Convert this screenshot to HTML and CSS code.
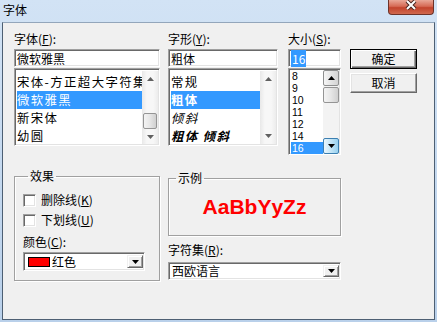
FILE: index.html
```html
<!doctype html>
<html>
  <head>
    <title>字体</title>
    <meta charset="UTF-8" />
    <link rel="stylesheet" href="styles.css">
  </head>

  <body>
    <div class="window">
      <div class="titlebar">
        <span class="title">字体</span>
        <div class="close">
          <svg width="12" height="10" viewBox="0 0 12 10">
            <path d="M2 1L10 9M10 1L2 9" stroke="#4a2620" stroke-width="4" />
            <path d="M2 1L10 9M10 1L2 9" stroke="#ffffff" stroke-width="2" />
          </svg>
        </div>
      </div>

      <div class="client">
        <div class="top">
          <!-- font name -->
          <div class="col col-font">
            <div class="label">字体(<u>F</u>):</div>
            <div class="textbox">微软雅黑</div>
            <div class="list list-font">
              <ul class="items">
                <li>宋体-方正超大字符集</li>
                <li class="sel">微软雅黑</li>
                <li>新宋体</li>
                <li>幼圆</li>
              </ul>
              <div class="scrollbar flat">
                <div class="sb-btn">
                  <svg width="7" height="4" viewBox="0 0 7 4"><path d="M3.5 0L7 4H0z" /></svg>
                </div>
                <div class="sb-track"><div class="sb-thumb thumb-font"></div></div>
                <div class="sb-btn">
                  <svg width="7" height="4" viewBox="0 0 7 4"><path d="M0 0H7L3.5 4z" /></svg>
                </div>
              </div>
            </div>
          </div>

          <!-- font style -->
          <div class="col col-style">
            <div class="label">字形(<u>Y</u>):</div>
            <div class="textbox">粗体</div>
            <div class="list list-style">
              <ul class="items">
                <li>常规</li>
                <li class="sel bold">粗体</li>
                <li class="italic">倾斜</li>
                <li class="bold italic">粗体 倾斜</li>
              </ul>
              <div class="scrollbar flat">
                <div class="sb-btn">
                  <svg width="7" height="4" viewBox="0 0 7 4"><path d="M3.5 0L7 4H0z" /></svg>
                </div>
                <div class="sb-track"></div>
                <div class="sb-btn">
                  <svg width="7" height="4" viewBox="0 0 7 4"><path d="M0 0H7L3.5 4z" /></svg>
                </div>
              </div>
            </div>
          </div>

          <!-- font size -->
          <div class="col col-size">
            <div class="label">大小(<u>S</u>):</div>
            <div class="textbox"><span class="selected">16</span></div>
            <div class="list list-size">
              <ul class="items">
                <li>8</li>
                <li>9</li>
                <li>10</li>
                <li>11</li>
                <li>12</li>
                <li>14</li>
                <li class="sel">16</li>
              </ul>
              <div class="scrollbar raised">
                <div class="sb-btn">
                  <svg width="7" height="4" viewBox="0 0 7 4"><path d="M3.5 0L7 4H0z" /></svg>
                </div>
                <div class="sb-track"><div class="sb-thumb thumb-size"></div></div>
                <div class="sb-btn hot">
                  <svg width="7" height="4" viewBox="0 0 7 4"><path d="M0 0H7L3.5 4z" /></svg>
                </div>
              </div>
            </div>
          </div>

          <div class="col col-buttons">
            <button class="btn btn-default">确定</button>
            <button class="btn">取消</button>
          </div>
        </div>

        <div class="bottom">
          <fieldset class="group effects">
            <legend>效果</legend>
            <div class="check"><span class="box"></span>删除线(<u>K</u>)</div>
            <div class="check"><span class="box"></span>下划线(<u>U</u>)</div>
            <div class="label label-color">颜色(<u>C</u>):</div>
            <div class="combo combo-color">
              <span class="swatch"></span>
              <span class="combo-text">红色</span>
              <span class="drop">
                <svg width="7" height="4" viewBox="0 0 7 4"><path d="M0 0H7L3.5 4z" /></svg>
              </span>
            </div>
          </fieldset>

          <div class="col-right">
            <fieldset class="group sample">
              <legend>示例</legend>
              <div class="sample-text">AaBbYyZz</div>
            </fieldset>
            <div class="label label-charset">字符集(<u>R</u>):</div>
            <div class="combo combo-charset">
              <span class="combo-text">西欧语言</span>
              <span class="drop">
                <svg width="7" height="4" viewBox="0 0 7 4"><path d="M0 0H7L3.5 4z" /></svg>
              </span>
            </div>
          </div>
        </div>
      </div>
    </div>
  </body>
</html>
```

FILE: styles.css
```css
* {
  box-sizing: border-box;
}
html,
body {
  margin: 0;
  padding: 0;
}
body {
  font: 12px/16px 'Noto Sans CJK SC', 'Liberation Sans', sans-serif;
  color: #000000;
  background: #bcd3ec;
}
u {
  text-decoration: underline;
}
.window {
  width: 437px;
  height: 322px;
  display: flex;
  flex-direction: column;
  background: linear-gradient(#d2e3f5, #b9d0ea);
}
.titlebar {
  height: 22px;
  display: flex;
  align-items: flex-start;
  padding-left: 3px;
}
.title {
  margin-top: 3px;
  line-height: 14px;
}
.close {
  margin-left: auto;
  margin-right: 3px;
  width: 46px;
  height: 15px;
  border: 1px solid #6e3329;
  border-top: 0;
  border-radius: 0 0 4px 4px;
  background: linear-gradient(#e9a797, #d66a55 45%, #c2432c 55%, #d0694f);
  display: flex;
  align-items: flex-start;
  justify-content: center;
}
.client {
  flex: 1;
  margin: 0 2px 2px 2px;
  border: 1px solid #4d5f73;
  border-top-color: #93a6bb;
  background: #f0f0f0;
  padding: 8px 0 0 11px;
}

/* top row */
.top {
  display: flex;
  align-items: flex-start;
}
.col-font {
  width: 146px;
}
.col-style {
  width: 110px;
  margin-left: 8px;
}
.col-size {
  width: 53px;
  margin-left: 10px;
}
.col-buttons {
  width: 67px;
  margin-left: 9px;
  padding-top: 18px;
  display: flex;
  flex-direction: column;
  gap: 4px;
}
.label {
  height: 16px;
  line-height: 16px;
  margin-bottom: 2px;
  white-space: nowrap;
}
.textbox,
.list,
.combo {
  background: #ffffff;
  border: 1px solid;
  border-color: #a0a0a0 #ffffff #ffffff #a0a0a0;
  box-shadow: inset 1px 1px #696969, inset -1px -1px #e3e3e3;
}
.textbox {
  height: 18px;
  padding: 1px 0 0 2px;
  line-height: 15px;
  margin-bottom: 1px;
  white-space: nowrap;
}
.selected {
  background: #3399ff;
  color: #ffffff;
  padding: 0 1px;
}
.list {
  display: flex;
  padding: 2px 1px 1px 2px;
  overflow: hidden;
}
.list-font,
.list-style {
  height: 78px;
}
.list-size {
  height: 87px;
  padding: 1px 1px 0 2px;
}
.items {
  flex: 1;
  min-width: 0;
  margin: 0;
  padding: 0;
  list-style: none;
  overflow: hidden;
}
.list-font .items,
.list-style .items {
  padding-top: 2px;
  font-size: 12.4px;
  letter-spacing: 1.4px;
}
.items li {
  height: 18px;
  line-height: 18px;
  white-space: nowrap;
}
.list-size .items li {
  height: 12px;
  line-height: 12px;
  font-family: 'Liberation Sans', Arial, sans-serif;
  font-size: 10.5px;
  padding-left: 1px;
}
.items li.sel {
  background: #3399ff;
  color: #ffffff;
}
.bold {
  font-weight: 700;
}
.italic {
  font-style: italic;
}

/* scrollbars */
.scrollbar {
  width: 16px;
  flex: none;
  display: flex;
  flex-direction: column;
}
.scrollbar.flat {
  background: linear-gradient(90deg, #e8e8e8, #f7f7f7 30%, #f7f7f7 70%, #ececec);
}
.scrollbar.raised {
  background: #f3f3f3;
}
.sb-btn {
  height: 16px;
  display: flex;
  align-items: center;
  justify-content: center;
}
.sb-btn svg {
  fill: #606060;
}
.raised .sb-btn {
  border: 1px solid #8e8f8f;
  border-radius: 2px;
  background: linear-gradient(90deg, #f6f6f6, #e4e4e4 50%, #d4d4d4);
}
.raised .sb-btn svg {
  fill: #000000;
}
.raised .sb-btn.hot {
  border-color: #3c7fb1;
  background: linear-gradient(90deg, #eaf6fd, #c4e5f6 50%, #98d1ef);
}
.sb-track {
  flex: 1;
}
.sb-thumb {
  height: 16px;
  margin: 0 1px;
  border: 1px solid #959595;
  border-radius: 2px;
  background: linear-gradient(90deg, #f4f4f4, #e6e6e6 50%, #d0d0d0);
}
.thumb-font {
  margin-top: 27px;
}
.thumb-size {
  margin: 1px 0 0 0;
}

/* buttons */
.btn {
  height: 20px;
  padding: 0;
  font: inherit;
  color: #000000;
  background: #f0f0f0;
  border: 1px solid;
  border-color: #ffffff #696969 #696969 #ffffff;
  box-shadow: inset -1px -1px #a0a0a0, inset 1px 1px #e3e3e3;
}
.btn-default {
  border-color: #000000;
  box-shadow: inset 1px 1px #ffffff, inset -1px -1px #696969, inset -2px -2px #a0a0a0;
}

/* bottom row */
.bottom {
  display: flex;
  align-items: flex-start;
  margin-top: 15px;
}
.group {
  margin: 0;
  min-width: 0;
  border: 1px solid #a0a0a0;
  box-shadow: 1px 1px 0 #ffffff, inset 1px 1px 0 #ffffff;
}
.group legend {
  padding: 0 2px;
  line-height: 12px;
}
.effects {
  width: 146px;
  height: 111px;
  padding: 8px 0 0 8px;
}
.effects legend {
  margin-left: 5px;
}
.check {
  height: 20px;
  display: flex;
  align-items: center;
  white-space: nowrap;
}
.box {
  width: 13px;
  height: 13px;
  margin-right: 5px;
  background: #ffffff;
  border: 1px solid;
  border-color: #a0a0a0 #ffffff #ffffff #a0a0a0;
  box-shadow: inset 1px 1px #696969, inset -1px -1px #e3e3e3;
}
.label-color {
  margin-top: 4px;
}
.combo {
  display: flex;
  align-items: center;
  padding: 2px;
}
.combo-color {
  width: 122px;
  height: 19px;
}
.swatch {
  width: 22px;
  height: 10px;
  margin-left: 2px;
  background: #ff0000;
  border: 1px solid #000000;
}
.combo-text {
  flex: 1;
  line-height: 14px;
  white-space: nowrap;
}
.combo-color .combo-text {
  padding-left: 2px;
}
.combo-charset .combo-text {
  padding-left: 1px;
}
.drop {
  width: 16px;
  height: 100%;
  margin-right: -1px;
  display: flex;
  align-items: center;
  justify-content: center;
  background: #f0f0f0;
  border: 1px solid;
  border-color: #f0f0f0 #696969 #696969 #f0f0f0;
  box-shadow: inset 1px 1px #ffffff, inset -1px -1px #a0a0a0;
}
.col-right {
  width: 173px;
  margin-left: 8px;
  padding-top: 2px;
}
.sample {
  height: 64px;
  padding: 0;
  display: flex;
  align-items: center;
  justify-content: center;
}
.sample legend {
  margin-left: 7px;
}
.sample-text {
  font: 700 21px/24px 'Liberation Sans', Arial, sans-serif;
  color: #ff0000;
  text-align: center;
  margin-top: -6px;
}
.label-charset {
  margin-top: 6px;
  margin-bottom: 4px;
}
.combo-charset {
  height: 18px;
}
```
